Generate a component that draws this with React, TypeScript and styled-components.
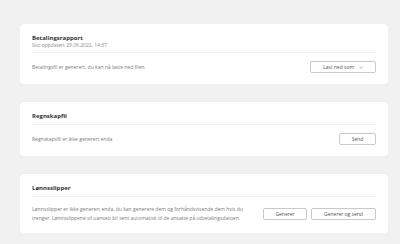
import React from 'react';
import styled, { createGlobalStyle } from 'styled-components';

const GlobalStyle = createGlobalStyle`
  html, body {
    margin: 0;
    padding: 0;
    background: #f1f1f1;
    font-family: 'Open Sans', 'Noto Sans', sans-serif;
  }
`;

const Page = styled.div`
  width: 400px;
  height: 244px;
  box-sizing: border-box;
  padding: 24px 12px 0 20px;
  display: flex;
  flex-direction: column;
  gap: 18px;
`;

const Card = styled.section`
  background: #fff;
  border-radius: 4px;
  padding: 10px 12px 11px;
  box-shadow: 0 0 1px rgba(0, 0, 0, 0.04);
`;

const Header = styled.div`
  padding-bottom: 4px;
  border-bottom: 1px solid #f2f2f2;
`;

const Title = styled.h2`
  margin: 0;
  font-size: 6px;
  line-height: 8px;
  font-weight: 700;
  color: #333;
`;

const Subtitle = styled.div`
  font-size: 5px;
  line-height: 6px;
  color: #8a8a8a;
`;

const Body = styled.div`
  padding-top: 8px;
  display: flex;
  align-items: center;
  justify-content: space-between;
  gap: 9px;
`;

const Text = styled.p`
  margin: 0;
  flex: 1;
  font-size: 5px;
  line-height: 8.5px;
  color: #7a7a7a;
`;

const Actions = styled.div`
  display: flex;
  gap: 4px;
  flex-shrink: 0;
`;

const Button = styled.button<{ $width: number }>`
  width: ${p => p.$width}px;
  height: 12px;
  padding: 0;
  box-sizing: border-box;
  border: 1px solid #c9c9c9;
  border-radius: 2px;
  background: #fff;
  font-family: inherit;
  font-size: 5px;
  color: #555;
  display: flex;
  align-items: center;
  justify-content: center;
  gap: 5px;
`;

const Chevron = () => (
  <svg width="4" height="3" viewBox="0 0 8 5">
    <path d="M1 1 L4 4 L7 1" fill="none" stroke="#777" strokeWidth="1.2" />
  </svg>
);

const App: React.FC = () => {
  return (
    <>
      <GlobalStyle />
      <Page>
        <Card>
          <Header>
            <Title>Betalingsrapport</Title>
            <Subtitle>Sist oppdatert 29.06.2022, 14:37</Subtitle>
          </Header>
          <Body>
            <Text>Betalingsfil er generert, du kan nå laste ned filen</Text>
            <Button $width={66}>
              Last ned som <Chevron />
            </Button>
          </Body>
        </Card>
        <Card>
          <Header>
            <Title>Regnskapfil</Title>
          </Header>
          <Body>
            <Text>Regnskapsfil er ikke generert enda</Text>
            <Button $width={37}>Send</Button>
          </Body>
        </Card>
        <Card>
          <Header>
            <Title>Lønnsslipper</Title>
          </Header>
          <Body>
            <Text>
              Lønnsslipper er ikke generert enda, du kan generere dem og forhåndsvisende dem hvis du
              trenger. Lønnsslippene vil uansett bli sent automatisk til de ansatte på utbetalingsdatoen.
            </Text>
            <Actions>
              <Button $width={44}>Generer</Button>
              <Button $width={65}>Generer og send</Button>
            </Actions>
          </Body>
        </Card>
      </Page>
    </>
  );
};

export default App;
